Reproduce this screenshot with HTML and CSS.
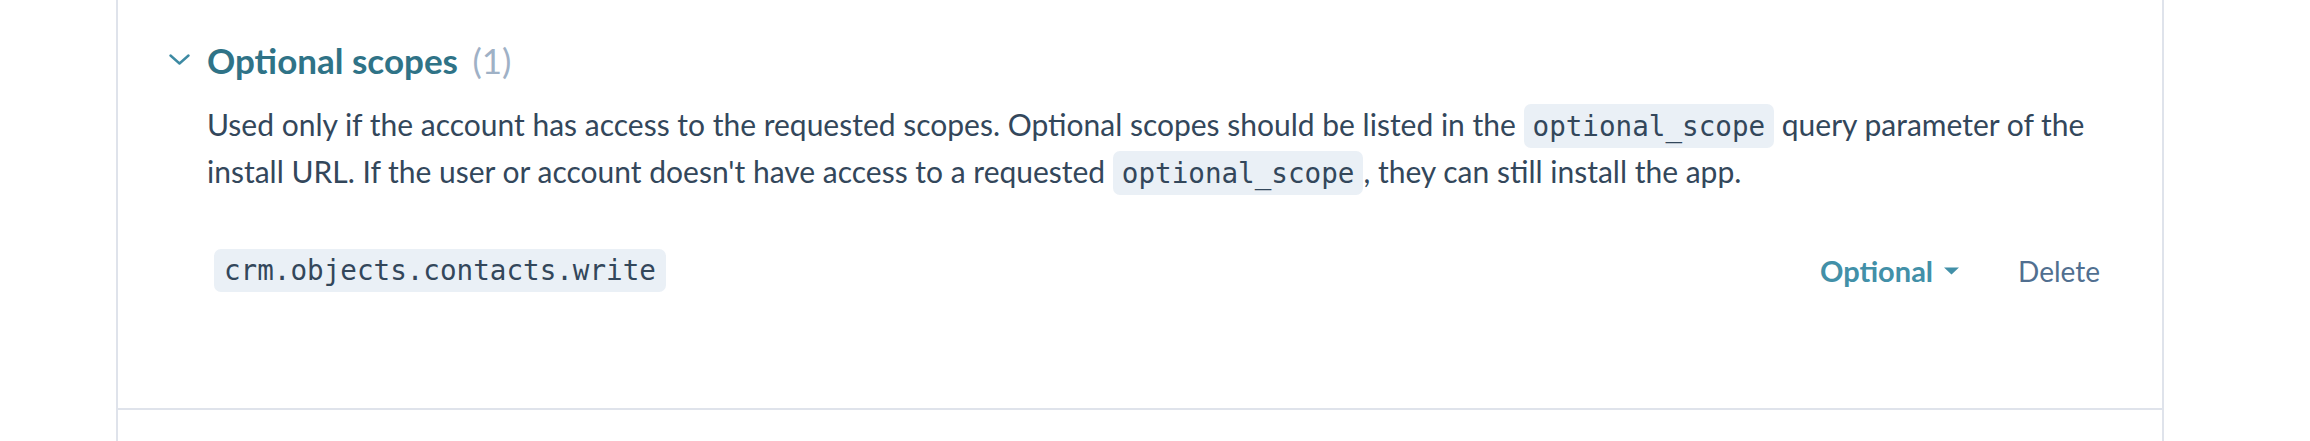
FILE: index.html
```html
<!DOCTYPE html>
<html lang="en">
<head>
<meta charset="utf-8">
<title>Optional scopes</title>
<link rel="stylesheet" href="styles.css">
</head>
<body>
<div class="card">
  <section class="scope-section">
    <div class="section-header">
      <svg class="chevron" width="21" height="11" viewBox="0 0 21 11" aria-hidden="true">
        <path d="M1.5 1.5 L10.5 9.5 L19.5 1.5" fill="none" stroke="currentColor" stroke-width="2.4" stroke-linecap="round" stroke-linejoin="round"/>
      </svg>
      <h2 class="section-title">Optional scopes <span class="count">(1)</span></h2>
    </div>
    <p class="description">Used only if the account has access to the requested scopes. Optional scopes should be listed in the <code class="inline-code">optional_scope</code> query parameter of the install URL. If the user or account doesn't have access to a requested <code class="inline-code">optional_scope</code>, they can still install the app.</p>
    <div class="scope-row">
      <code class="scope-chip">crm.objects.contacts.write</code>
      <div class="row-actions">
        <button class="dropdown-btn" type="button">Optional
          <svg class="caret" width="17" height="8" viewBox="0 0 17 8" aria-hidden="true"><path d="M1 0.5 H16 L8.5 7.5 Z" fill="currentColor"/></svg>
        </button>
        <button class="delete-btn" type="button">Delete</button>
      </div>
    </div>
  </section>
</div>
</body>
</html>
```
FILE: styles.css
```css
html, body {
  margin: 0;
  padding: 0;
  background: #ffffff;
}

body {
  font-family: "Lato", "Noto Sans", sans-serif;
  color: #33475b;
}

.card {
  margin-left: 116px;
  width: 2044px;
  min-height: 441px;
  border-left: 2px solid #dfe3eb;
  border-right: 2px solid #dfe3eb;
}

.scope-section {
  padding: 40px 62px 0 51px;
  height: 368px;
  border-bottom: 2px solid #dfe3eb;
}

.section-header {
  display: flex;
  align-items: center;
  gap: 17px;
  height: 40px;
}

.chevron {
  color: #3d8aa3;
  flex: none;
  margin-top: -2px;
}

.section-title {
  margin: 0;
  font-family: "Lato", sans-serif;
  font-weight: 700;
  font-size: 35px;
  line-height: 40px;
  color: #2f7387;
}

.count {
  font-weight: 400;
  color: #9fb1c6;
  margin-left: 6px;
}

.description {
  margin: 21px 0 0 38px;
  font-size: 30px;
  line-height: 47px;
  color: #33475b;
}

.inline-code,
.scope-chip {
  font-family: "DejaVu Sans Mono", "Liberation Mono", monospace;
  font-size: 27.6px;
  background: #eaf0f6;
  color: #33475b;
  border-radius: 7px;
}

.inline-code {
  line-height: 1;
  padding: 6px 9px 5px;
}

.scope-row {
  display: flex;
  align-items: center;
  justify-content: space-between;
  margin: 54px 0 0 45px;
}

.scope-chip {
  display: inline-block;
  line-height: 43px;
  height: 43px;
  padding: 0 10px;
}

.row-actions {
  display: flex;
  align-items: center;
  gap: 58px;
}

.dropdown-btn,
.delete-btn {
  border: 0;
  background: none;
  padding: 0;
  font-family: "Lato", sans-serif;
  cursor: pointer;
}

.dropdown-btn {
  display: flex;
  align-items: center;
  gap: 10px;
  font-size: 29px;
  font-weight: 700;
  color: #4290a8;
}

.delete-btn {
  font-size: 28px;
  font-weight: 400;
  color: #516f90;
}
```
